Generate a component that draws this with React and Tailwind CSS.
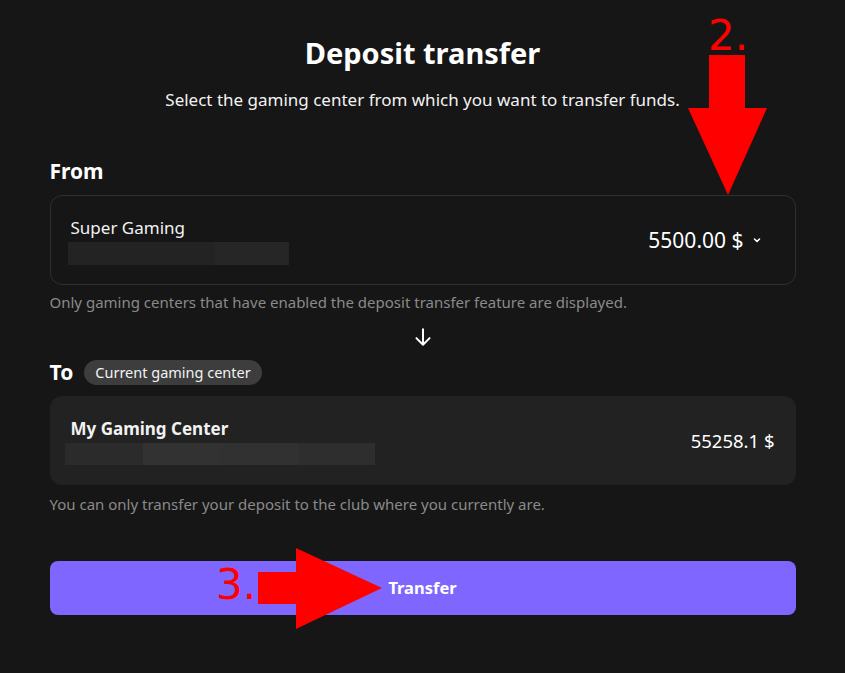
import React from "react";

const font = { fontFamily: '"Noto Sans", "Open Sans", sans-serif' };

export default function App() {
  return (
    <div className="relative min-h-screen w-full bg-[#161616] text-white" style={font}>
      <div className="mx-auto w-[746px] pt-[34px] pb-[58px]">
        <h1 className="text-center text-[29px] font-bold leading-[37px]">Deposit transfer</h1>
        <p className="mt-[17px] text-center text-[17px] leading-6 text-[#f2f2f2]">
          Select the gaming center from which you want to transfer funds.
        </p>

        <div className="mt-[45px] text-[21px] font-bold leading-7">From</div>
        <div className="mt-[10px] flex h-[90px] items-center justify-between rounded-xl border border-[#2f2f2f] pl-[20px] pr-[33px]">
          <div className="flex flex-col">
            <span className="text-[17px] leading-6 text-[#f2f2f2]">Super Gaming</span>
            <div className="ml-[-3px] mt-[2px] flex h-[23px]">
              <div className="w-[147px] bg-[#232323]" />
              <div className="w-[74px] bg-[#262626]" />
            </div>
          </div>
          <div className="flex items-center gap-[8px]">
            <span className="text-[21px] leading-7">5500.00 $</span>
            <svg width="10" height="10" viewBox="0 0 10 10" fill="none" stroke="white" strokeWidth="1.6" strokeLinecap="round" strokeLinejoin="round">
              <path d="M2.5 4 L5 6.5 L7.5 4" />
            </svg>
          </div>
        </div>
        <p className="mt-[7px] text-[15px] leading-5 text-[#8a8a8a]">
          Only gaming centers that have enabled the deposit transfer feature are displayed.
        </p>

        <div className="mt-[14px] flex justify-center">
          <svg width="22" height="22" viewBox="0 0 20 20" fill="none" stroke="white" strokeWidth="1.8" strokeLinecap="round" strokeLinejoin="round">
            <path d="M10 3 V17 M4 11 L10 17 L16 11" />
          </svg>
        </div>

        <div className="mt-[10px] flex items-center gap-[11px]">
          <span className="text-[21px] font-bold leading-7">To</span>
          <span className="rounded-full bg-[#3d3d3d] px-[11px] py-[2px] text-[14.5px] leading-[21px] text-[#f2f2f2]">
            Current gaming center
          </span>
        </div>
        <div className="mt-[10px] flex h-[89px] items-center justify-between rounded-xl bg-[#222222] pl-[21px] pr-[21px]">
          <div className="flex flex-col">
            <span className="text-[17px] font-bold leading-6 text-[#f2f2f2]">My Gaming Center</span>
            <div className="ml-[-6px] mt-[2px] flex h-[22px]">
              <div className="w-[78px] bg-[#2b2b2b]" />
              <div className="w-[77px] bg-[#323232]" />
              <div className="w-[78px] bg-[#313131]" />
              <div className="w-[77px] bg-[#2e2e2e]" />
            </div>
          </div>
          <span className="text-[18.5px] leading-7">55258.1 $</span>
        </div>
        <p className="mt-[9px] text-[15px] leading-5 text-[#8a8a8a]">
          You can only transfer your deposit to the club where you currently are.
        </p>

        <button className="mt-[47px] flex h-[54px] w-full items-center justify-center rounded-lg bg-[#7f66ff] text-[16.5px] font-bold text-white">
          Transfer
        </button>
      </div>

      {/* Annotation 2 */}
      <span
        className="absolute left-[708px] top-[12px] text-[42px] leading-[48px] text-[#ff0000]"
        style={{ fontFamily: '"DejaVu Sans", sans-serif' }}
      >
        2.
      </span>
      <svg className="absolute left-[686px] top-[54px]" width="84" height="142" viewBox="0 0 84 142">
        <polygon points="23,1 59,1 59,54 81,54 42,141 2,54 23,54" fill="#ff0000" />
      </svg>

      {/* Annotation 3 */}
      <span
        className="absolute left-[216px] top-[561px] text-[42px] leading-[48px] text-[#ff0000]"
        style={{ fontFamily: '"DejaVu Sans", sans-serif' }}
      >
        3.
      </span>
      <svg className="absolute left-[256px] top-[547px]" width="128" height="83" viewBox="0 0 128 83">
        <polygon points="2,25 40,25 40,1 126,41 40,82 40,57 2,57" fill="#ff0000" />
      </svg>
    </div>
  );
}
